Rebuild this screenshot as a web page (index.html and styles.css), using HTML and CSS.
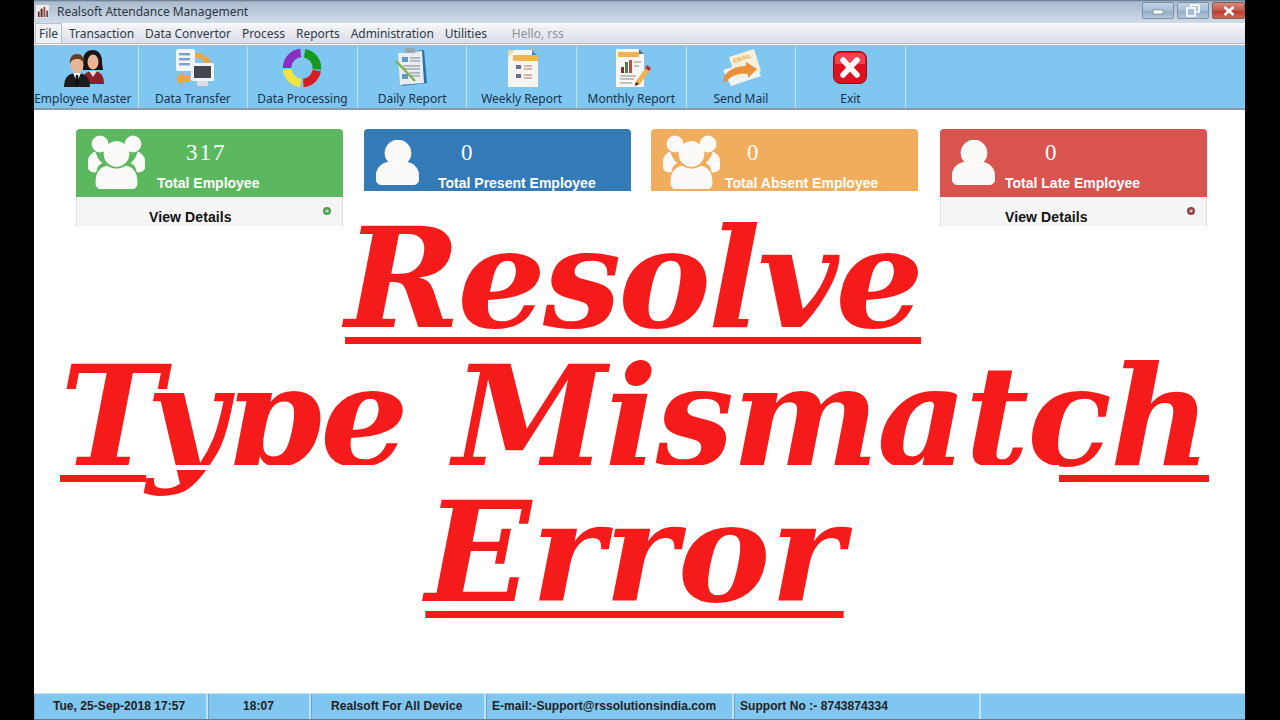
FILE: index.html
```html
<!DOCTYPE html>
<html lang="en">
<head>
    <meta charset="UTF-8">
    <title>Realsoft Attendance Management</title>
    <link rel="stylesheet" href="styles.css">
</head>
<body>
    <div class="app">
        <div class="title-bar">
            <svg class="app-icon" viewBox="0 0 16 16">
                <rect x="1" y="1" width="14" height="14" fill="#f3eeee"/>
                <rect x="3" y="8" width="2" height="6" fill="#7a2b2b"/>
                <rect x="6" y="5" width="2" height="9" fill="#2b2b2b"/>
                <rect x="9" y="3" width="2" height="11" fill="#b03a3a"/>
                <rect x="12" y="7" width="2" height="7" fill="#555"/>
            </svg>
            <span class="app-title">Realsoft Attendance Management</span>
            <div class="win-buttons">
                <div class="win-btn">
                    <svg width="13" height="8" viewBox="0 0 13 8"><rect x="1" y="3" width="10" height="4" fill="#fff" stroke="#5c6b7d" stroke-width="0.6"/></svg>
                </div>
                <div class="win-btn">
                    <svg width="14" height="13" viewBox="0 0 14 13"><rect x="5" y="1" width="8" height="7" fill="none" stroke="#fff" stroke-width="1.6"/><rect x="1" y="4" width="8" height="8" fill="#a9bed3" stroke="#fff" stroke-width="1.6"/></svg>
                </div>
                <div class="win-btn win-close">
                    <svg width="12" height="10" viewBox="0 0 12 10"><path d="M1.5 1L10.5 9M10.5 1L1.5 9" stroke="#fff" stroke-width="2.6"/></svg>
                </div>
            </div>
        </div>

        <div class="menu-bar">
            <span class="menu-item menu-active">File</span>
            <span class="menu-item">Transaction</span>
            <span class="menu-item">Data Convertor</span>
            <span class="menu-item">Process</span>
            <span class="menu-item">Reports</span>
            <span class="menu-item">Administration</span>
            <span class="menu-item">Utilities</span>
            <span class="menu-hello">Hello, rss</span>
        </div>

        <div class="toolbar">
            <div class="tool tool-first">
                <svg class="tool-icon" viewBox="0 0 44 40">
                    <!-- woman behind -->
                    <path d="M22 13c0-8 5-11 10-11s9 4 9 11c0 4 1 7 1 9H22c0-3 0-5 0-9z" fill="#1a1416"/>
                    <path d="M21 36c0-8 3-13 11-13s11 5 11 13z" fill="#8c1f2a"/>
                    <ellipse cx="32" cy="14" rx="5.5" ry="7.5" fill="#e9b89b"/>
                    <path d="M28 23l4 6 4-6z" fill="#f0d8cc"/>
                    <!-- man in front -->
                    <path d="M3 39c0-9 4-14 13-14s13 5 13 14z" fill="#1c1c20"/>
                    <path d="M12 25l4 9 4-9z" fill="#f4f4f4"/>
                    <path d="M15 27h2l1 9-2 3-2-3z" fill="#111"/>
                    <ellipse cx="16" cy="17" rx="6.5" ry="8" fill="#e8b596"/>
                    <path d="M9 16c-1-7 3-10 7-10s8 3 7 10c-1-3-3-5-7-5s-6 2-7 5z" fill="#6b3a22"/>
                </svg>
                <span class="tool-label">Employee Master</span>
            </div>
            <div class="tool">
                <svg class="tool-icon" viewBox="0 0 44 40">
                    <rect x="5" y="1" width="19" height="22" rx="2" fill="#f1f4f8"/>
                    <rect x="8" y="5" width="11" height="2.4" fill="#7da2c9"/>
                    <rect x="8" y="10" width="11" height="2.4" fill="#7da2c9"/>
                    <rect x="8" y="15" width="11" height="2.4" fill="#7da2c9"/>
                    <path d="M24 5h6l5 5v-3l5 6-6 5v-3l-5-5h-5z" fill="#eda63f"/>
                    <path d="M6 27l6-5v3h7v6h-7v5l-6-5z" fill="#eda63f" transform="translate(0 2)"/>
                    <rect x="20" y="15" width="23" height="18" rx="1.5" fill="#f2f4f6"/>
                    <rect x="23" y="18" width="17" height="12" fill="#44484e"/>
                    <rect x="26" y="33" width="11" height="5" fill="#d7dde2"/>
                </svg>
                <span class="tool-label">Data Transfer</span>
            </div>
            <div class="tool">
                <svg class="tool-icon" viewBox="0 0 44 40">
                    <g fill="none" stroke-width="8.500">
                        <path d="M24.600 5.200A15 15 0 0 1 36.900 21.300" stroke="#16991e"/>
                        <path d="M36.800 22.600A15 15 0 0 1 23.300 34.900" stroke="#d91c22"/>
                        <path d="M20.700 34.900A15 15 0 0 1 7.100 21.300" stroke="#f1e63f"/>
                        <path d="M7 20A15 15 0 0 1 20.700 5.100" stroke="#8b2fc0"/>
                    </g>
                </svg>
                <span class="tool-label">Data Processing</span>
            </div>
            <div class="tool">
                <svg class="tool-icon" viewBox="0 0 44 40">
                    <path d="M9 5l25-3 3 33-25 3z" fill="#2c6fa8"/>
                    <path d="M8 5l24-2 2 32-24 2z" fill="#e9edf0"/>
                    <rect x="15" y="0" width="10" height="5" rx="1" fill="#9aa7b0"/>
                    <rect x="12" y="9" width="6" height="5" fill="#5a9bc6"/>
                    <path d="M20 10h10M20 13h10M13 18h17M13 21h17M20 25h10M20 28h10" stroke="#7a8590" stroke-width="1.2"/>
                    <rect x="12" y="26" width="6" height="5" fill="#5a9bc6"/>
                    <path d="M6 13l19 20" stroke="#7eb24a" stroke-width="2.4"/>
                </svg>
                <span class="tool-label">Daily Report</span>
            </div>
            <div class="tool">
                <svg class="tool-icon" viewBox="0 0 44 40">
                    <path d="M8 2h24l6 6v31H8z" fill="#f7f5ef"/>
                    <path d="M32 2l6 6h-6z" fill="#3f93a8"/>
                    <path d="M8 2l7 0-7 8z" fill="#efd9a8"/>
                    <rect x="13" y="7" width="25" height="6" fill="#f0b454"/>
                    <rect x="16" y="17" width="5" height="4" fill="#6f6a8f"/>
                    <rect x="16" y="26" width="5" height="4" fill="#6f6a8f"/>
                    <path d="M24 18h8M24 21h8M24 27h8M24 30h8" stroke="#b5776a" stroke-width="1.2"/>
                </svg>
                <span class="tool-label">Weekly Report</span>
            </div>
            <div class="tool">
                <svg class="tool-icon" viewBox="0 0 44 40">
                    <path d="M7 1h23l5 5v33H7z" fill="#f8f7f3"/>
                    <path d="M30 1l5 5h-5z" fill="#5b6f80"/>
                    <rect x="9" y="4" width="21" height="5" fill="#f0b14e"/>
                    <rect x="12" y="19" width="3" height="6" fill="#7a2f28"/>
                    <rect x="16" y="14" width="3" height="11" fill="#3f7f5a"/>
                    <rect x="20" y="12" width="3" height="13" fill="#c7463a"/>
                    <path d="M25 14h7M25 18h5M11 28h16M11 31h14M11 35h12" stroke="#8b8b86" stroke-width="1.2"/>
                    <path d="M27 33l11-15 4 3-11 15-5 2z" fill="#f0b454"/>
                    <path d="M36 20l2-3 4 3-2 3z" fill="#b03334"/>
                    <path d="M26 38l1-4 3 2z" fill="#222"/>
                </svg>
                <span class="tool-label">Monthly Report</span>
            </div>
            <div class="tool">
                <svg class="tool-icon" viewBox="0 0 44 40">
                    <path d="M4 22L36 12l6 16-30 10z" fill="#f1f4f7"/>
                    <path d="M10 9L35 1l7 22-25 8z" fill="#f7efd9"/>
                    <text class="mail-word" x="0" y="0" transform="translate(15 15) rotate(-17)">EMAIL</text>
                    <path d="M4 32c2-9 12-14 23-14v-4l11 7-9 9v-4c-9-1-16 1-21 7-2 1-4 1-4-1z" fill="#e9913a"/>
                </svg>
                <span class="tool-label">Send Mail</span>
            </div>
            <div class="tool">
                <svg class="tool-icon" viewBox="0 0 44 40">
                    <rect x="5.5" y="3.5" width="33" height="32" rx="7" fill="#e0101f" stroke="#8f0f18" stroke-width="1"/>
                    <path d="M7 10c0-4 3-5 6-5h18c3 0 6 1 6 5v6H7z" fill="#f0424e"/>
                    <path d="M15 12l14 15M29 12L15 27" stroke="#fff" stroke-width="5.5" stroke-linecap="round"/>
                </svg>
                <span class="tool-label">Exit</span>
            </div>
        </div>

        <div class="content">
            <div class="cards">
                <div class="card card-green">
                    <div class="card-top">
                        <div class="card-icon">
                            <svg class="icon-group" viewBox="0 0 57 54"><use href="#group"/></svg>
                        </div>
                        <div>
                            <div class="card-num">317</div>
                            <div class="card-label">Total Employee</div>
                        </div>
                    </div>
                    <div class="card-foot">
                        <span>View Details</span>
                        <svg class="foot-arrow" viewBox="0 0 8 8"><circle cx="4" cy="4" r="4"/><path d="M2 4h3M3.800 2.400L5.500 4 3.800 5.600" fill="none" stroke="#eef5ee" stroke-width="1"/></svg>
                    </div>
                </div>
                <div class="card card-blue">
                    <div class="card-top">
                        <div class="card-icon">
                            <svg class="icon-person" viewBox="0 0 43 45"><use href="#person"/></svg>
                        </div>
                        <div>
                            <div class="card-num">0</div>
                            <div class="card-label">Total Present Employee</div>
                        </div>
                    </div>
                </div>
                <div class="card card-orange">
                    <div class="card-top">
                        <div class="card-icon">
                            <svg class="icon-group" viewBox="0 0 57 54"><use href="#group"/></svg>
                        </div>
                        <div>
                            <div class="card-num">0</div>
                            <div class="card-label">Total Absent Employee</div>
                        </div>
                    </div>
                </div>
                <div class="card card-red">
                    <div class="card-top">
                        <div class="card-icon">
                            <svg class="icon-person" viewBox="0 0 43 45"><use href="#person"/></svg>
                        </div>
                        <div>
                            <div class="card-num">0</div>
                            <div class="card-label">Total Late Employee</div>
                        </div>
                    </div>
                    <div class="card-foot">
                        <span>View Details</span>
                        <svg class="foot-arrow" viewBox="0 0 8 8"><circle cx="4" cy="4" r="4"/><path d="M2 4h3M3.800 2.400L5.500 4 3.800 5.600" fill="none" stroke="#f5eeee" stroke-width="1"/></svg>
                    </div>
                </div>
            </div>

            <div class="headline">
                <div class="headline-line line-resolve line-under">Resolve</div>
                <div class="headline-line line-cut"><span class="line-under">T</span>ype Mismat<span class="line-under">ch</span><div class="line-mask"></div></div>
                <div class="headline-line line-error line-under">Error</div>
            </div>
        </div>

        <div class="status-bar">
            <div class="status-cell cell-date">Tue, 25-Sep-2018 17:57</div>
            <div class="status-cell cell-time">18:07</div>
            <div class="status-cell cell-brand">Realsoft For All Device</div>
            <div class="status-cell cell-mail">E-mail:-Support@rssolutionsindia.com</div>
            <div class="status-cell cell-phone">Support No :- 8743874334</div>
        </div>
    </div>

    <svg class="svg-defs" width="0" height="0">
        <defs>
            <g id="person" fill="#fbfaf8" stroke="currentColor" stroke-width="0.8">
                <path d="M0 38c0-10 5-15 14-16 5 4 10 4 15 0 9 1 14 6 14 16 0 5-3 7-7 7H7c-4 0-7-2-7-7z"/>
                <circle cx="22" cy="13" r="13"/>
            </g>
            <g id="group" fill="#fbfaf8" stroke="currentColor" stroke-width="0.8">
                <circle cx="12" cy="9" r="8"/>
                <circle cx="45" cy="9" r="8"/>
                <path d="M0 30c0-7 2-11 7-13 2 6 4 9 7 11-4 2-5 4-6 9-6 0-8-2-8-7z"/>
                <path d="M57 30c0-7-2-11-7-13-2 6-4 9-7 11 4 2 5 4 6 9 6 0 8-2 8-7z"/>
                <path d="M8 48c0-10 3-15 11-17 6 4 13 4 19 0 8 2 11 7 11 17 0 4-2 6-6 6H14c-4 0-6-2-6-6z"/>
                <circle cx="28.500" cy="19" r="12.500"/>
            </g>
        </defs>
    </svg>
</body>
</html>
```

FILE: styles.css
```css
* {
    box-sizing: border-box;
}

body {
    margin: 0;
    height: 720px;
    overflow: hidden;
    background-color: #000;
    font-family: "Liberation Sans", Arial, sans-serif;
}

.app {
    display: flex;
    flex-direction: column;
    width: 1211px;
    height: 720px;
    margin-left: 34px;
    background-color: #fff;
}

.svg-defs {
    display: block;
}

/* title bar */
.title-bar {
    display: flex;
    align-items: flex-start;
    height: 23px;
    padding-top: 4px;
    background: linear-gradient(#5b7186 0, #a9bcd0 2px, #bccbdb 12px, #cfdbe8 100%);
}

.app-icon {
    width: 15px;
    height: 15px;
    margin: 0 7px 0 1px;
}

.app-title {
    font-family: "Noto Sans", sans-serif;
    font-size: 12px;
    line-height: 15px;
    letter-spacing: -0.03px;
    color: #2b3744;
}

.win-buttons {
    display: flex;
    gap: 3px;
    margin-left: auto;
    margin-top: -2px;
}

.win-btn {
    display: flex;
    align-items: center;
    justify-content: center;
    width: 32px;
    height: 17px;
    border: 1px solid #7f93a8;
    border-radius: 2px;
    background: linear-gradient(#c3d3e3, #a9bfd5 50%, #93adc6 55%, #b3c7da);
}

.win-close {
    width: 33px;
    border-color: #8a5a55;
    background: linear-gradient(#d68a7c, #c5564a 50%, #b83a2e 55%, #cf6a58);
}

/* menu */
.menu-bar {
    display: flex;
    align-items: center;
    height: 23px;
    padding-left: 1px;
    font-family: "Noto Sans", sans-serif;
    font-size: 12px;
    color: #2f3b47;
    background: linear-gradient(#fafbfc, #eceef3 30%, #dcdfe9);
    border-bottom: 3px double #b4b9c1;
}

.menu-item {
    padding: 1px 3px;
    margin-right: 3px;
    border: 1px solid transparent;
    letter-spacing: -0.03px;
}

.menu-active {
    background-color: #eef1f6;
    border-color: #b9c0ca;
}

.menu-hello {
    margin-left: 18px;
    color: #8e939a;
}

/* toolbar */
.toolbar {
    display: flex;
    height: 64px;
    background-color: #7fc6f0;
    border-bottom: 2px solid #8b9aa6;
}

.tool {
    display: flex;
    flex-direction: column;
    align-items: center;
    width: 109.6px;
    padding-top: 2px;
    border-right: 1px solid #c4e2f5;
}

.tool-first {
    width: 104.6px;
    padding-right: 6px;
    white-space: nowrap;
}

.tool-icon {
    width: 44px;
    height: 40px;
}

.tool-label {
    margin-top: 3px;
    font-family: "Noto Sans", sans-serif;
    font-size: 12px;
    line-height: 16px;
    letter-spacing: -0.03px;
    color: #17324b;
}

.mail-word {
    font-family: "Liberation Sans", sans-serif;
    font-size: 6px;
    font-weight: bold;
    fill: #efb35a;
}

/* cards */
.content {
    flex: 1;
    min-height: 0;
    overflow: hidden;
}

.cards {
    display: flex;
    align-items: flex-start;
    padding: 19px 0 0 42px;
}

.card {
    flex: none;
    width: 267px;
    margin-right: 21px;
}

.card-blue { margin-right: 20px; }
.card-orange { margin-right: 22px; }

.card-top {
    display: flex;
    height: 62px;
    border-radius: 4px 4px 0 0;
    color: #fff;
}

.card-green .card-top,
.card-red .card-top {
    height: 68px;
}

.card-green { color: #5cb85f; }
.card-blue { color: #337ab7; }
.card-orange { color: #f0ad5e; }
.card-red { color: #d9534f; }

.card-green .card-top { background-color: #5cb85f; }
.card-blue .card-top { background-color: #337ab7; }
.card-orange .card-top { background-color: #f0ad5e; }
.card-red .card-top { background-color: #d9534f; }

.card-icon {
    flex: none;
    padding-left: 12px;
    width: 74px;
}

.card-green .card-icon { width: 81px; }
.card-red .card-icon { width: 65px; }

.icon-group {
    display: block;
    width: 57px;
    height: 54px;
    margin-top: 6px;
}

.icon-person {
    display: block;
    width: 43px;
    height: 45px;
    margin-top: 11px;
}

.card-num {
    margin-top: 12px;
    font-family: "Liberation Serif", serif;
    font-size: 23px;
    line-height: 24px;
    letter-spacing: 2px;
    color: #fff;
}

.card-green .card-num { margin-left: 29px; }
.card-blue .card-num { margin-left: 23px; }
.card-orange .card-num { margin-left: 22px; }
.card-red .card-num { margin-left: 40px; }

.card-label {
    margin-top: 9px;
    font-size: 14px;
    font-weight: bold;
    line-height: 18px;
    white-space: nowrap;
    color: #fff;
}

.card-foot {
    display: flex;
    height: 29px;
    padding: 11px 11px 0 72px;
    font-size: 14px;
    font-weight: bold;
    line-height: 18px;
    letter-spacing: 0.1px;
    color: #111;
    background-color: #f5f5f5;
    border-left: 1px solid #ddd;
    border-right: 1px solid #ddd;
}

.card-red .card-foot {
    padding-left: 64px;
}

.foot-arrow {
    width: 8px;
    height: 8px;
    margin: -1px 0 0 auto;
    fill: #4d9f52;
}

.card-red .foot-arrow {
    fill: #8e4441;
}

/* big headline */
.headline {
    display: flex;
    flex-direction: column;
    align-items: center;
    margin-top: -16px;
    font-family: "DejaVu Serif", serif;
    font-size: 139px;
    font-weight: bold;
    font-style: italic;
    line-height: 137px;
    letter-spacing: -2px;
    color: #f51b1b;
}

.headline-line {
    position: relative;
    white-space: nowrap;
}

.line-resolve {
    letter-spacing: -3px;
    margin-left: -13px;
}

.line-cut {
    margin: 1px 0 -1px -10px;
}

.line-error {
    letter-spacing: 0;
    margin-left: -10px;
}

.line-under {
    text-decoration: underline;
    text-decoration-thickness: 7px;
    text-underline-offset: 10px;
    text-decoration-skip-ink: none;
}

/* descenders of the middle line are cut off in the original */
.line-mask {
    position: absolute;
    left: 150px;
    right: 150px;
    top: 117px;
    height: 40px;
    background-color: #fff;
}

.line-mask::before {
    content: "";
    position: absolute;
    left: -50px;
    width: 50px;
    top: 0;
    height: 5px;
    background-color: #fff;
}

/* status bar */
.status-bar {
    display: flex;
    height: 27px;
    background-color: #7fc6f0;
    border-top: 1px solid #c9e4f5;
    border-bottom: 1px solid #5c7f99;
    font-size: 12px;
    font-weight: bold;
    line-height: 24px;
    letter-spacing: 0.05px;
    color: #222;
}

.status-cell {
    padding-left: 5px;
    border-right: 2px solid #c4e2f5;
    border-left: 1px solid #6aa6cc;
    white-space: nowrap;
}

.cell-date { width: 174px; padding-left: 18px; }
.cell-time { width: 103px; padding-left: 34px; }
.cell-brand { width: 175px; padding-left: 19px; }
.cell-mail { width: 248px; }
.cell-phone { width: 247px; }
```
